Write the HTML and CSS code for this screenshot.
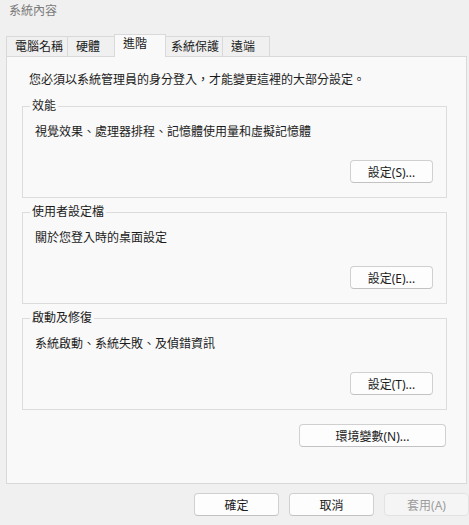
FILE: index.html
```html
<!DOCTYPE html>
<html lang="zh-Hant">
<head>
  <meta charset="UTF-8" />
  <title>系統內容</title>
  <link rel="stylesheet" href="styles.css">
</head>
<body>

<div class="window">
  <div class="titlebar">系統內容</div>

  <div class="tabs">
    <div class="tab tab-name">電腦名稱</div>
    <div class="tab tab-hw">硬體</div>
    <div class="tab tab-adv active">進階</div>
    <div class="tab tab-prot">系統保護</div>
    <div class="tab tab-remote">遠端</div>
  </div>

  <div class="panel">
    <p class="note">您必須以系統管理員的身分登入，才能變更這裡的大部分設定。</p>

    <fieldset class="group">
      <legend>效能</legend>
      <p class="group-text">視覺效果、處理器排程、記憶體使用量和虛擬記憶體</p>
      <div class="group-actions">
        <button class="btn">設定(S)...</button>
      </div>
    </fieldset>

    <fieldset class="group">
      <legend>使用者設定檔</legend>
      <p class="group-text">關於您登入時的桌面設定</p>
      <div class="group-actions">
        <button class="btn">設定(E)...</button>
      </div>
    </fieldset>

    <fieldset class="group">
      <legend>啟動及修復</legend>
      <p class="group-text">系統啟動、系統失敗、及偵錯資訊</p>
      <div class="group-actions">
        <button class="btn">設定(T)...</button>
      </div>
    </fieldset>

    <div class="env-row">
      <button class="btn btn-env">環境變數(N)...</button>
    </div>
  </div>

  <div class="dialog-buttons">
    <button class="btn btn-dlg">確定</button>
    <button class="btn btn-dlg">取消</button>
    <button class="btn btn-dlg" disabled>套用(A)</button>
  </div>
</div>

</body>
</html>
```

FILE: styles.css
```css
* {
  box-sizing: border-box;
}

body {
  margin: 0;
  background-color: #f0f0f0;
  color: #1b1b1b;
  font-family: "Noto Sans", "Noto Sans CJK TC", sans-serif;
  font-size: 12px;
}

.window {
  width: 469px;
  height: 525px;
  overflow: hidden;
}

.titlebar {
  height: 30px;
  padding-left: 9px;
  line-height: 22px;
  color: #7a7a7a;
}

.tabs {
  display: flex;
  align-items: flex-end;
  height: 26px;
  margin-left: 6px;
}

.tab {
  height: 20px;
  padding-left: 8px;
  line-height: 19px;
  border: 1px solid #d9d9d9;
  border-bottom: none;
  margin-right: -1px;
  background-color: #f0f0f0;
  white-space: nowrap;
}

.tab-name { width: 62px; }
.tab-hw { width: 48px; }
.tab-adv { width: 52px; }
.tab-prot { width: 58px; padding-left: 5px; }
.tab-remote { width: 48px; }

.tab.active {
  position: relative;
  z-index: 1;
  height: 23px;
  margin-bottom: -1px;
  line-height: 17px;
  background-color: #f9f9f9;
}

.panel {
  width: 461px;
  height: 428px;
  margin-left: 6px;
  padding: 0 19px 0 15px;
  border: 1px solid #d9d9d9;
  background-color: #f9f9f9;
}

.note {
  margin: 0 0 11px 7px;
  padding-top: 15px;
  line-height: 16px;
}

.group {
  margin: 0 0 7px 0;
  padding: 11px 13px 14px 12px;
  border: 1px solid #dcdcdc;
}

.group legend {
  margin-left: -5px;
  padding: 0 2px;
  line-height: 14px;
}

.group-text {
  margin: 0;
  line-height: 16px;
}

.group-actions {
  display: flex;
  justify-content: flex-end;
  margin-top: 20px;
}

.btn {
  height: 23px;
  padding: 0;
  border: 1px solid #d0d0d0;
  border-bottom-color: #c2c2c2;
  border-radius: 4px;
  background-color: #fdfdfd;
  color: #1b1b1b;
  font-family: inherit;
  font-size: 12px;
  width: 83px;
}

.btn:disabled {
  border-color: #e2e2e2;
  background-color: #f5f5f5;
  color: #9d9d9d;
}

.env-row {
  display: flex;
  justify-content: flex-end;
  margin-top: 14px;
  margin-right: 1px;
}

.btn-env {
  width: 147px;
}

.dialog-buttons {
  display: flex;
  justify-content: flex-end;
  gap: 10px;
  margin-top: 9px;
}

.btn-dlg {
  width: 85px;
}
```
